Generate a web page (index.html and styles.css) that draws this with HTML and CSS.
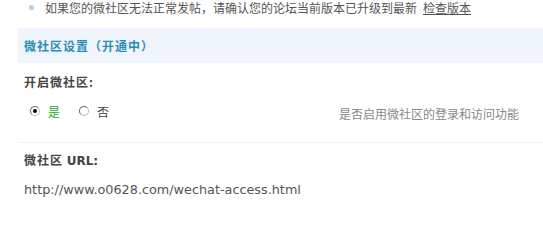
FILE: index.html
```html
<!DOCTYPE html>
<html>
<head>
<meta charset="utf-8">
<link rel="stylesheet" href="styles.css">
</head>
<body>
<div class="tip"><span class="dot"></span>如果您的微社区无法正常发帖，请确认您的论坛当前版本已升级到最新 <a class="chk" href="#">检查版本</a></div>
<div class="head">微社区设置（开通中）</div>
<div class="label">开启微社区:</div>
<div class="row">
  <div class="radios">
    <span class="radio on"></span><span class="yes">是</span>
    <span class="radio"></span><span class="no">否</span>
  </div>
  <div class="desc">是否启用微社区的登录和访问功能</div>
</div>
<div class="label label2">微社区 <span class="lat">URL:</span></div>
<div class="url">http://www.o0628.com/wechat-access.html</div>
</body>
</html>
```
FILE: styles.css
```css
body {
  margin: 0;
  font-family: "Noto Sans CJK SC", sans-serif;
  font-size: 12px;
  color: #444;
  background: #fff;
}
.tip {
  display: flex;
  align-items: center;
  height: 15px;
  padding-left: 29px;
  color: #555;
  line-height: 15px;
}
.dot {
  width: 5px;
  height: 5px;
  border-radius: 50%;
  background: #c8c8c8;
  margin-right: 11px;
}
.chk {
  color: #555;
  text-decoration: underline;
  margin-left: 6px;
}
.head {
  margin: 13px 0 0 18px;
  height: 35px;
  line-height: 35px;
  padding-left: 6px;
  background: #f0f5fc;
  color: #2a8db6;
  font-weight: bold;
  letter-spacing: 1px;
}
.label {
  margin-top: 11px;
  padding-left: 24px;
  font-weight: bold;
  color: #444;
  line-height: 16px;
  letter-spacing: 1px;
}
.row {
  display: flex;
  align-items: center;
  justify-content: space-between;
  margin: 13px 0 0 18px;
  padding: 0 24px 23px 12px;
  border-bottom: 1px solid #eef0f2;
  height: 16px;
}
.radios {
  display: flex;
  align-items: center;
}
.radio {
  width: 8px;
  height: 8px;
  border: 1px solid #888;
  border-color: #666 #bbb #bbb #666;
  border-radius: 50%;
  background: #fff;
  margin-right: 8px;
  position: relative;
}
.radio.on::after {
  content: "";
  position: absolute;
  left: 2px;
  top: 2px;
  width: 4px;
  height: 4px;
  border-radius: 50%;
  background: #000;
}
.yes { color: #1fae1f; margin-right: 19px; }
.no { color: #444; }
.desc {
  color: #888;
  margin-top: 5px;
}
.label2 {
  margin-top: 9px;
}
.lat {
  font-family: "DejaVu Sans", sans-serif;
  font-size: 12px;
  letter-spacing: 0;
}
.url {
  margin-top: 13px;
  padding-left: 24px;
  font-family: "DejaVu Sans", sans-serif;
  font-size: 12.8px;
  color: #555;
}
```
